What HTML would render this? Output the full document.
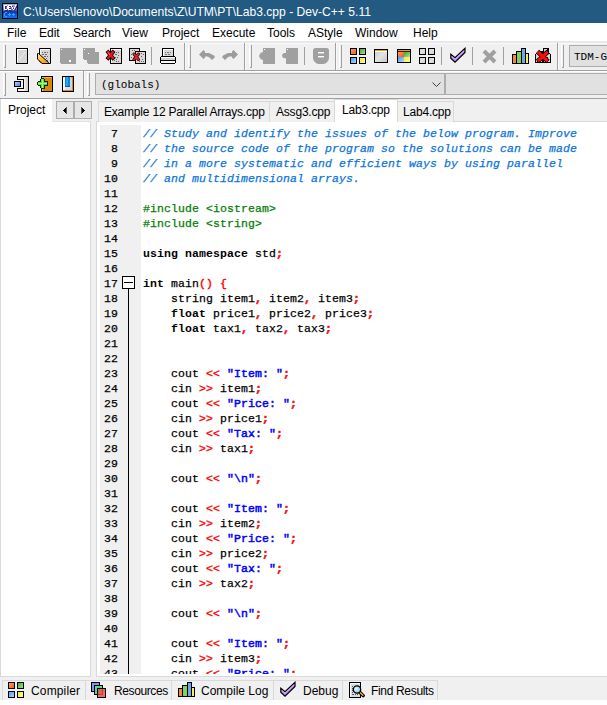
<!DOCTYPE html>
<html><head><meta charset="utf-8">
<style>
*{margin:0;padding:0;box-sizing:border-box}
html,body{width:607px;height:705px;overflow:hidden;background:#fff;position:relative;font-family:"Liberation Sans",sans-serif;font-size:12px;color:#000}
.a{position:absolute}
#title{left:0;top:0;width:607px;height:23px;background:#225a82}
#title .t{left:23px;top:5px;color:#fff;font-size:12.1px;white-space:nowrap}
#menu{left:0;top:23px;width:607px;height:18px;background:#fff}
#menu span{position:absolute;top:3px;white-space:nowrap}
#tb{left:0;top:41px;width:607px;height:58px;background:#f0f0f0;border-top:2px solid #e8e8e8}
.hl{position:absolute;height:1px}
.vl{position:absolute;width:1px}
.grip{position:absolute;width:3px;border-left:1px solid #fff;border-right:1px solid #a0a0a0}
.grip::after{content:"";position:absolute;left:0;bottom:0;width:1px;height:1px;background:#a0a0a0}
.bsep{position:absolute;width:2px;border-left:1px solid #a0a0a0;border-right:1px solid #fafafa}
.sep{position:absolute;width:1px;background:#a0a0a0}
.combo{position:absolute;background:#e1e1e1;border:1px solid #adadad;font-family:"Liberation Mono",monospace;font-size:11px;color:#000}
#tabs{left:0;top:99px;width:607px;height:578px;background:#f0f0f0}
#left{left:0;top:99px;width:91px;height:578px;background:#fff;border-left:1px solid #d9d9d9;border-right:1px solid #d9d9d9;border-bottom:1px solid #d9d9d9}
#code{left:96px;top:121px;width:511px;height:556px;background:#fff;border-left:1px solid #d9d9d9;border-top:1px solid #d9d9d9;border-bottom:1px solid #d9d9d9;overflow:hidden}
#gut{left:100px;top:125px;width:41px;height:549px;background:#f0f0f0}
#lines{position:absolute;left:0;top:0;width:607px;height:674px;overflow:hidden}
.ln{position:absolute;left:100px;width:18px;text-align:right;font-family:"Liberation Mono",monospace;font-size:11.5px;letter-spacing:0.1px;white-space:pre;height:15px;line-height:15px;-webkit-text-stroke:0.25px currentColor}
.cl{position:absolute;left:143px;font-family:"Liberation Mono",monospace;font-size:11.5px;letter-spacing:0.1px;white-space:pre;height:15px;line-height:15px;-webkit-text-stroke:0.25px currentColor}
.c{color:#0a74dc;font-style:italic}
.p{color:#008000}
.k{font-weight:bold;-webkit-text-stroke:0}
.s{color:#0000ff;font-weight:normal;-webkit-text-stroke:0.5px #0000ff}
.o{color:#ff0000;font-weight:normal;-webkit-text-stroke:0.4px #ff0000}
.q{font-weight:bold;-webkit-text-stroke:0.5px #ff0000}
.etab{position:absolute;top:101px;height:21px;background:#f0f0f0;border:1px solid #d9d9d9;border-bottom:none;white-space:nowrap}
.etab span{position:absolute;top:3px;letter-spacing:-0.2px}
#bot{left:0;top:677px;width:607px;height:23px;background:#f0f0f0}
.btab{position:absolute;top:680px;height:20px;border-left:1px solid #d9d9d9;border-top:1px solid #d9d9d9;white-space:nowrap}
</style></head><body>
<div id="title" class="a">
  <svg class="a" style="left:2px;top:3px" width="16" height="16" viewBox="0 0 16 16" shape-rendering="crispEdges">
    <defs><linearGradient id="gt" x1="0" y1="0" x2="0" y2="1"><stop offset="0" stop-color="#b8b0ec"/><stop offset="1" stop-color="#5a58b0"/></linearGradient>
    <linearGradient id="gb" x1="0" y1="0" x2="0" y2="1"><stop offset="0" stop-color="#0838b0"/><stop offset="1" stop-color="#1a70f0"/></linearGradient></defs>
    <rect x="0" y="0" width="16" height="16" fill="#02021a"/>
    <rect x="1" y="1" width="14" height="7" fill="url(#gt)"/>
    <rect x="1" y="8" width="14" height="7" fill="url(#gb)"/>
    <rect x="3" y="3" width="1" height="1" fill="#303078"/><rect x="4" y="3" width="1" height="1" fill="#303078"/><rect x="5" y="3" width="1" height="1" fill="#303078"/><rect x="3" y="4" width="1" height="1" fill="#303078"/><rect x="6" y="4" width="1" height="1" fill="#303078"/><rect x="3" y="5" width="1" height="1" fill="#303078"/><rect x="6" y="5" width="1" height="1" fill="#303078"/><rect x="3" y="6" width="1" height="1" fill="#303078"/><rect x="6" y="6" width="1" height="1" fill="#303078"/><rect x="3" y="7" width="1" height="1" fill="#303078"/><rect x="4" y="7" width="1" height="1" fill="#303078"/><rect x="5" y="7" width="1" height="1" fill="#303078"/><rect x="7" y="3" width="1" height="1" fill="#303078"/><rect x="8" y="3" width="1" height="1" fill="#303078"/><rect x="9" y="3" width="1" height="1" fill="#303078"/><rect x="7" y="4" width="1" height="1" fill="#303078"/><rect x="7" y="5" width="1" height="1" fill="#303078"/><rect x="8" y="5" width="1" height="1" fill="#303078"/><rect x="7" y="6" width="1" height="1" fill="#303078"/><rect x="7" y="7" width="1" height="1" fill="#303078"/><rect x="8" y="7" width="1" height="1" fill="#303078"/><rect x="9" y="7" width="1" height="1" fill="#303078"/><rect x="10" y="3" width="1" height="1" fill="#303078"/><rect x="14" y="3" width="1" height="1" fill="#303078"/><rect x="10" y="4" width="1" height="1" fill="#303078"/><rect x="14" y="4" width="1" height="1" fill="#303078"/><rect x="11" y="5" width="1" height="1" fill="#303078"/><rect x="13" y="5" width="1" height="1" fill="#303078"/><rect x="11" y="6" width="1" height="1" fill="#303078"/><rect x="13" y="6" width="1" height="1" fill="#303078"/><rect x="12" y="7" width="1" height="1" fill="#303078"/><rect x="2" y="2" width="1" height="1" fill="#fff"/><rect x="3" y="2" width="1" height="1" fill="#fff"/><rect x="4" y="2" width="1" height="1" fill="#fff"/><rect x="2" y="3" width="1" height="1" fill="#fff"/><rect x="5" y="3" width="1" height="1" fill="#fff"/><rect x="2" y="4" width="1" height="1" fill="#fff"/><rect x="5" y="4" width="1" height="1" fill="#fff"/><rect x="2" y="5" width="1" height="1" fill="#fff"/><rect x="5" y="5" width="1" height="1" fill="#fff"/><rect x="2" y="6" width="1" height="1" fill="#fff"/><rect x="3" y="6" width="1" height="1" fill="#fff"/><rect x="4" y="6" width="1" height="1" fill="#fff"/><rect x="6" y="2" width="1" height="1" fill="#fff"/><rect x="7" y="2" width="1" height="1" fill="#fff"/><rect x="8" y="2" width="1" height="1" fill="#fff"/><rect x="6" y="3" width="1" height="1" fill="#fff"/><rect x="6" y="4" width="1" height="1" fill="#fff"/><rect x="7" y="4" width="1" height="1" fill="#fff"/><rect x="6" y="5" width="1" height="1" fill="#fff"/><rect x="6" y="6" width="1" height="1" fill="#fff"/><rect x="7" y="6" width="1" height="1" fill="#fff"/><rect x="8" y="6" width="1" height="1" fill="#fff"/><rect x="9" y="2" width="1" height="1" fill="#fff"/><rect x="13" y="2" width="1" height="1" fill="#fff"/><rect x="9" y="3" width="1" height="1" fill="#fff"/><rect x="13" y="3" width="1" height="1" fill="#fff"/><rect x="10" y="4" width="1" height="1" fill="#fff"/><rect x="12" y="4" width="1" height="1" fill="#fff"/><rect x="10" y="5" width="1" height="1" fill="#fff"/><rect x="12" y="5" width="1" height="1" fill="#fff"/><rect x="11" y="6" width="1" height="1" fill="#fff"/><rect x="3" y="9" width="1" height="1" fill="#2aa8ff"/><rect x="4" y="9" width="1" height="1" fill="#2aa8ff"/><rect x="2" y="10" width="1" height="1" fill="#2aa8ff"/><rect x="2" y="11" width="1" height="1" fill="#2aa8ff"/><rect x="2" y="12" width="1" height="1" fill="#2aa8ff"/><rect x="3" y="13" width="1" height="1" fill="#2aa8ff"/><rect x="4" y="13" width="1" height="1" fill="#2aa8ff"/><rect x="7" y="10" width="1" height="1" fill="#2aa8ff"/><rect x="6" y="11" width="1" height="1" fill="#2aa8ff"/><rect x="7" y="11" width="1" height="1" fill="#2aa8ff"/><rect x="8" y="11" width="1" height="1" fill="#2aa8ff"/><rect x="7" y="12" width="1" height="1" fill="#2aa8ff"/><rect x="11" y="10" width="1" height="1" fill="#2aa8ff"/><rect x="10" y="11" width="1" height="1" fill="#2aa8ff"/><rect x="11" y="11" width="1" height="1" fill="#2aa8ff"/><rect x="12" y="11" width="1" height="1" fill="#2aa8ff"/><rect x="11" y="12" width="1" height="1" fill="#2aa8ff"/>
  </svg>
  <div class="a t">C:\Users\lenovo\Documents\Z\UTM\PT\Lab3.cpp - Dev-C++ 5.11</div>
</div>
<div id="menu" class="a">
  <span style="left:7px">File</span>
  <span style="left:39px">Edit</span>
  <span style="left:73px">Search</span>
  <span style="left:122px">View</span>
  <span style="left:162px">Project</span>
  <span style="left:212px">Execute</span>
  <span style="left:267px">Tools</span>
  <span style="left:308px">AStyle</span>
  <span style="left:355px">Window</span>
  <span style="left:413px">Help</span>
</div>
<div id="tb" class="a"></div>
<div class="hl" style="left:0;top:43px;width:607px;background:#fafafa"></div>
<!-- toolbar row divider -->
<div class="hl" style="left:0;top:70px;width:607px;background:#a0a0a0"></div>
<div class="hl" style="left:0;top:71px;width:607px;background:#fff"></div>
<div class="hl" style="left:0;top:98px;width:607px;background:#a0a0a0"></div>
<!-- grips row1 -->
<div class="grip" style="left:3px;top:45px;height:23px"></div>
<div class="bsep" style="left:184px;top:43px;height:27px"></div>
<div class="grip" style="left:188px;top:45px;height:23px"></div>
<div class="bsep" style="left:244px;top:43px;height:27px"></div>
<div class="grip" style="left:249px;top:45px;height:23px"></div>
<div class="bsep" style="left:335px;top:43px;height:27px"></div>
<div class="grip" style="left:339px;top:45px;height:23px"></div>
<div class="bsep" style="left:557px;top:43px;height:27px"></div>
<div class="grip" style="left:561px;top:45px;height:23px"></div>
<div class="sep" style="left:151px;top:47px;height:18px"></div>
<div class="sep" style="left:304px;top:47px;height:18px"></div>
<div class="sep" style="left:441px;top:47px;height:18px"></div>
<div class="sep" style="left:472px;top:47px;height:18px"></div>
<div class="sep" style="left:503px;top:47px;height:18px"></div>
<div class="combo" style="left:569px;top:45px;width:60px;height:22px"><span class="a" style="left:4px;top:5px">TDM-GCC</span></div>
<!-- grips row2 -->
<div class="grip" style="left:3px;top:73px;height:23px"></div>
<div class="bsep" style="left:83px;top:71px;height:27px"></div>
<div class="grip" style="left:87px;top:73px;height:23px"></div>
<div class="combo" style="left:95px;top:73px;width:350px;height:22px"><span class="a" style="left:5px;top:5px">(globals)</span>
  <svg class="a" style="left:336px;top:8px" width="9" height="6" viewBox="0 0 9 6"><path d="M0.5 0.5 L4.5 4.5 L8.5 0.5" stroke="#404040" stroke-width="1" fill="none"/></svg>
</div>
<div class="combo" style="left:445px;top:73px;width:170px;height:22px"></div>

<div id="tabs" class="a"></div>
<div id="left" class="a"></div>
<div class="a" style="left:52px;top:99px;width:39px;height:23px;background:#f0f0f0;border-bottom:1px solid #e3e3e3"></div>
<div class="a" style="left:0;top:99px;width:52px;height:23px;background:#fff;border-left:1px solid #d9d9d9"><span class="a" style="left:7px;top:4px">Project</span></div>
<div class="a" style="left:56px;top:101px;width:36px;height:18px;border:1px solid #adadad;background:#e6e6e6"></div>
<div class="a" style="left:73px;top:101px;width:2px;height:18px;background:#adadad"></div>
<svg class="a" style="left:63px;top:107px" width="4" height="7" viewBox="0 0 4 7" shape-rendering="crispEdges"><rect x="0" y="3" width="1" height="1"/><rect x="1" y="2" width="1" height="3"/><rect x="2" y="1" width="1" height="5"/><rect x="3" y="0" width="1" height="7" fill="#555"/></svg>
<svg class="a" style="left:81px;top:107px" width="4" height="7" viewBox="0 0 4 7" shape-rendering="crispEdges"><rect x="0" y="0" width="1" height="7" fill="#555"/><rect x="1" y="1" width="1" height="5"/><rect x="2" y="2" width="1" height="3"/><rect x="3" y="3" width="1" height="1"/></svg>

<div id="code" class="a"></div>
<div id="gut" class="a"></div>

<!-- editor tabs -->
<div class="etab" style="left:98px;width:172px"><span style="left:5px">Example 12 Parallel Arrays.cpp</span></div>
<div class="etab" style="left:269px;width:66px"><span style="left:6px">Assg3.cpp</span></div>
<div class="etab" style="left:397px;width:57px"><span style="left:5px">Lab4.cpp</span></div>
<div class="etab" style="left:334px;top:99px;width:64px;height:23px;background:#fff"><span style="left:7px;top:3px">Lab3.cpp</span></div>

<div class="a" style="left:122px;top:276px;width:13px;height:13px;border:1px solid #000;background:#fff"></div>
<div class="a" style="left:124px;top:282px;width:9px;height:1px;background:#000"></div>
<div class="a" style="left:128px;top:289px;width:1px;height:385px;background:#000"></div>
<div id="lines">
<div class="ln" style="top:126px">7</div>
<div class="cl" style="top:126px"><span class="c">// Study and identify the issues of the below program. Improve</span></div>
<div class="ln" style="top:141px">8</div>
<div class="cl" style="top:141px"><span class="c">// the source code of the program so the solutions can be made</span></div>
<div class="ln" style="top:156px">9</div>
<div class="cl" style="top:156px"><span class="c">// in a more systematic and efficient ways by using parallel</span></div>
<div class="ln" style="top:171px">10</div>
<div class="cl" style="top:171px"><span class="c">// and multidimensional arrays.</span></div>
<div class="ln" style="top:186px">11</div>
<div class="ln" style="top:201px">12</div>
<div class="cl" style="top:201px"><span class="p">#include &lt;iostream&gt;</span></div>
<div class="ln" style="top:216px">13</div>
<div class="cl" style="top:216px"><span class="p">#include &lt;string&gt;</span></div>
<div class="ln" style="top:231px">14</div>
<div class="ln" style="top:246px">15</div>
<div class="cl" style="top:246px"><span class="k">using</span> <span class="k">namespace</span> std<span class="o q">;</span></div>
<div class="ln" style="top:261px">16</div>
<div class="ln" style="top:276px">17</div>
<div class="cl" style="top:276px"><span class="k">int</span> main<span class="o">()</span> <span class="o">{</span></div>
<div class="ln" style="top:291px">18</div>
<div class="cl" style="top:291px">    string item1<span class="o q">,</span> item2<span class="o q">,</span> item3<span class="o q">;</span></div>
<div class="ln" style="top:306px">19</div>
<div class="cl" style="top:306px">    <span class="k">float</span> price1<span class="o q">,</span> price2<span class="o q">,</span> price3<span class="o q">;</span></div>
<div class="ln" style="top:321px">20</div>
<div class="cl" style="top:321px">    <span class="k">float</span> tax1<span class="o q">,</span> tax2<span class="o q">,</span> tax3<span class="o q">;</span></div>
<div class="ln" style="top:336px">21</div>
<div class="ln" style="top:351px">22</div>
<div class="ln" style="top:366px">23</div>
<div class="cl" style="top:366px">    cout <span class="o">&lt;&lt;</span> <span class="s">&quot;Item: &quot;</span><span class="o q">;</span></div>
<div class="ln" style="top:381px">24</div>
<div class="cl" style="top:381px">    cin <span class="o">&gt;&gt;</span> item1<span class="o q">;</span></div>
<div class="ln" style="top:396px">25</div>
<div class="cl" style="top:396px">    cout <span class="o">&lt;&lt;</span> <span class="s">&quot;Price: &quot;</span><span class="o q">;</span></div>
<div class="ln" style="top:411px">26</div>
<div class="cl" style="top:411px">    cin <span class="o">&gt;&gt;</span> price1<span class="o q">;</span></div>
<div class="ln" style="top:426px">27</div>
<div class="cl" style="top:426px">    cout <span class="o">&lt;&lt;</span> <span class="s">&quot;Tax: &quot;</span><span class="o q">;</span></div>
<div class="ln" style="top:441px">28</div>
<div class="cl" style="top:441px">    cin <span class="o">&gt;&gt;</span> tax1<span class="o q">;</span></div>
<div class="ln" style="top:456px">29</div>
<div class="ln" style="top:471px">30</div>
<div class="cl" style="top:471px">    cout <span class="o">&lt;&lt;</span> <span class="s">&quot;\n&quot;</span><span class="o q">;</span></div>
<div class="ln" style="top:486px">31</div>
<div class="ln" style="top:501px">32</div>
<div class="cl" style="top:501px">    cout <span class="o">&lt;&lt;</span> <span class="s">&quot;Item: &quot;</span><span class="o q">;</span></div>
<div class="ln" style="top:516px">33</div>
<div class="cl" style="top:516px">    cin <span class="o">&gt;&gt;</span> item2<span class="o q">;</span></div>
<div class="ln" style="top:531px">34</div>
<div class="cl" style="top:531px">    cout <span class="o">&lt;&lt;</span> <span class="s">&quot;Price: &quot;</span><span class="o q">;</span></div>
<div class="ln" style="top:546px">35</div>
<div class="cl" style="top:546px">    cin <span class="o">&gt;&gt;</span> price2<span class="o q">;</span></div>
<div class="ln" style="top:561px">36</div>
<div class="cl" style="top:561px">    cout <span class="o">&lt;&lt;</span> <span class="s">&quot;Tax: &quot;</span><span class="o q">;</span></div>
<div class="ln" style="top:576px">37</div>
<div class="cl" style="top:576px">    cin <span class="o">&gt;&gt;</span> tax2<span class="o q">;</span></div>
<div class="ln" style="top:591px">38</div>
<div class="ln" style="top:606px">39</div>
<div class="cl" style="top:606px">    cout <span class="o">&lt;&lt;</span> <span class="s">&quot;\n&quot;</span><span class="o q">;</span></div>
<div class="ln" style="top:621px">40</div>
<div class="ln" style="top:636px">41</div>
<div class="cl" style="top:636px">    cout <span class="o">&lt;&lt;</span> <span class="s">&quot;Item: &quot;</span><span class="o q">;</span></div>
<div class="ln" style="top:651px">42</div>
<div class="cl" style="top:651px">    cin <span class="o">&gt;&gt;</span> item3<span class="o q">;</span></div>
<div class="ln" style="top:666px">43</div>
<div class="cl" style="top:666px">    cout <span class="o">&lt;&lt;</span> <span class="s">&quot;Price: &quot;</span><span class="o q">;</span></div>
</div>

<div id="bot" class="a"></div>
<div class="a" style="left:0;top:700px;width:607px;height:5px;background:#fff"></div>
<div class="btab" style="left:2px;width:83px"><span class="a" style="left:28px;top:3px;letter-spacing:0.15px">Compiler</span></div>
<div class="btab" style="left:85px;width:86px"><span class="a" style="left:28px;top:3px;letter-spacing:-0.4px">Resources</span></div>
<div class="btab" style="left:171px;width:102px"><span class="a" style="left:29px;top:3px">Compile Log</span></div>
<div class="btab" style="left:273px;width:69px"><span class="a" style="left:29px;top:3px">Debug</span></div>
<div class="btab" style="left:342px;width:96px;border-right:1px solid #d9d9d9"><span class="a" style="left:28px;top:3px;letter-spacing:-0.33px">Find Results</span></div>

<svg width="0" height="0" style="position:absolute"><defs>
<linearGradient id="gO" x1="0" y1="0" x2="1" y2="1"><stop offset="0" stop-color="#ffa070"/><stop offset="1" stop-color="#e85a18"/></linearGradient>
<linearGradient id="gG" x1="0" y1="0" x2="1" y2="1"><stop offset="0" stop-color="#40a030"/><stop offset="1" stop-color="#a8e890"/></linearGradient>
<linearGradient id="gB" x1="0" y1="0" x2="1" y2="1"><stop offset="0" stop-color="#4a98e8"/><stop offset="1" stop-color="#b0d8ff"/></linearGradient>
<linearGradient id="gY" x1="0" y1="0" x2="1" y2="1"><stop offset="0" stop-color="#f0e830"/><stop offset="1" stop-color="#ffff9a"/></linearGradient>
<linearGradient id="gW" x1="0" y1="0" x2="1" y2="1"><stop offset="0" stop-color="#c8c8c8"/><stop offset="0.5" stop-color="#e2e2e2"/><stop offset="1" stop-color="#c4c4c4"/></linearGradient>
</defs></svg>
<!-- ===== toolbar row 1 icons ===== -->
<svg class="a" style="left:16px;top:48px" width="12" height="16" viewBox="0 0 12 16" shape-rendering="crispEdges">
  <rect x="0.5" y="0.5" width="11" height="15" rx="1" fill="#d6d6d6" stroke="#000"/>
  <path d="M1.5 14 V1.5 H10.5" stroke="#fff" fill="none"/>
  <path d="M3 12 L9 4" stroke="#e4e4e4" stroke-width="1.5" shape-rendering="auto"/>
</svg>
<svg class="a" style="left:36px;top:48px" width="15" height="16" viewBox="0 0 15 16">
  <defs><linearGradient id="og" x1="0" y1="0" x2="0.6" y2="1"><stop offset="0" stop-color="#ffe9a0"/><stop offset="0.5" stop-color="#ffc040"/><stop offset="1" stop-color="#ff9800"/></linearGradient></defs>
  <path d="M3.5 0.5 H14.5 V15.5 H6 L3.5 13 Z" fill="#d6d6d6" stroke="#000"/>
  <path d="M4.5 12 V1.5 H13.5" stroke="#fafafa" fill="none" shape-rendering="crispEdges"/>
  <g fill="#6a6a6a" shape-rendering="crispEdges"><rect x="6" y="4" width="1" height="1"/><rect x="8" y="4" width="2" height="1"/><rect x="11" y="4" width="1" height="1"/><rect x="6" y="6" width="2" height="1"/><rect x="9" y="6" width="2" height="1"/><rect x="8" y="8" width="2" height="1"/><rect x="11" y="8" width="1" height="1"/><rect x="10" y="10" width="1" height="1"/><rect x="11" y="12" width="1" height="1"/></g>
  <path d="M1.5 5.5 L2.5 5.5 L12.5 14.5 L12.5 15.5 L6 15.5 L1.5 11 Z" fill="url(#og)" stroke="#000" stroke-width="1" stroke-linejoin="miter"/>
</svg>
<svg class="a" style="left:60px;top:48px" width="16" height="16" viewBox="0 0 16 16" shape-rendering="crispEdges">
  <path d="M0 0 H16 V16 H1 L0 15 Z" fill="#a0a0a0"/>
  <rect x="1" y="1" width="1" height="1" fill="#fff"/><rect x="9" y="12" width="2" height="2" fill="#fff"/>
</svg>
<svg class="a" style="left:83px;top:48px" width="16" height="16" viewBox="0 0 16 16" shape-rendering="crispEdges">
  <path d="M0 0 H12 V4 H16 V16 H5 L4 15 V12 H1 L0 11 Z" fill="#a0a0a0"/>
  <rect x="1" y="1" width="1" height="1" fill="#fff"/><rect x="5" y="5" width="1" height="1" fill="#fff"/>
</svg>
<svg class="a" style="left:105px;top:48px" width="18" height="16" viewBox="0 0 18 16">
  <rect x="5.5" y="0.5" width="11" height="15" fill="#d8d8d8" stroke="#000" shape-rendering="crispEdges"/>
  <path d="M6.5 14.5 V1.5 H15.5" stroke="#fff" fill="none" shape-rendering="crispEdges"/>
  <g fill="#666" shape-rendering="crispEdges"><rect x="11" y="4" width="1" height="1"/><rect x="13" y="4" width="1" height="1"/><rect x="10" y="6" width="2" height="1"/><rect x="13" y="7" width="1" height="1"/><rect x="10" y="9" width="1" height="1"/><rect x="12" y="9" width="1" height="1"/><rect x="11" y="11" width="1" height="1"/><rect x="9" y="12" width="1" height="1"/><rect x="11" y="13" width="1" height="1"/><rect x="13" y="13" width="1" height="1"/></g>
  <path d="M3.2 4.2 L7.8 10 M7.8 4.2 L3.2 10" stroke="#000" stroke-width="3.8" stroke-linecap="square"/>
  <path d="M3.2 4.2 L7.8 10 M7.8 4.2 L3.2 10" stroke="#f01020" stroke-width="2.3" stroke-linecap="square"/>
  <path d="M2.8 4.6 L5 7" stroke="#ff9090" stroke-width="0.7"/>
</svg>
<svg class="a" style="left:129px;top:48px" width="17" height="16" viewBox="0 0 17 16">
  <rect x="0.5" y="0.5" width="10" height="12" fill="#d8d8d8" stroke="#000" shape-rendering="crispEdges"/>
  <rect x="6.5" y="3.5" width="10" height="12" fill="#d8d8d8" stroke="#000" shape-rendering="crispEdges"/>
  <g fill="#666" shape-rendering="crispEdges"><rect x="3" y="2" width="1" height="1"/><rect x="5" y="2" width="1" height="1"/><rect x="2" y="6" width="1" height="1"/><rect x="2" y="9" width="1" height="1"/><rect x="12" y="5" width="1" height="1"/><rect x="14" y="6" width="1" height="1"/><rect x="12" y="8" width="1" height="1"/><rect x="13" y="11" width="1" height="1"/><rect x="10" y="13" width="1" height="1"/><rect x="12" y="13" width="1" height="1"/><rect x="14" y="13" width="1" height="1"/></g>
  <path d="M5 6 L9.5 11.5 M9.5 6 L5 11.5" stroke="#000" stroke-width="3" stroke-linecap="round"/>
  <path d="M5 6 L9.5 11.5 M9.5 6 L5 11.5" stroke="#ee1c25" stroke-width="1.8" stroke-linecap="round"/>
</svg>
<svg class="a" style="left:159px;top:48px" width="18" height="17" viewBox="0 0 18 17">
  <rect x="3.5" y="0.5" width="11" height="8" fill="#d8d8d8" stroke="#000" shape-rendering="crispEdges"/>
  <path d="M4.5 7.5 V1.5 H13.5" stroke="#fff" fill="none" shape-rendering="crispEdges"/>
  <g fill="#777" shape-rendering="crispEdges"><rect x="6" y="4" width="1" height="1"/><rect x="8" y="4" width="2" height="1"/><rect x="11" y="4" width="1" height="1"/><rect x="6" y="6" width="2" height="1"/><rect x="9" y="6" width="2" height="1"/></g>
  <rect x="1.5" y="8.5" width="15" height="7" fill="#e0e0e0" stroke="#000" shape-rendering="crispEdges"/>
  <rect x="2" y="9" width="14" height="1" fill="#fafafa" shape-rendering="crispEdges"/>
  <rect x="2" y="10" width="14" height="2" fill="#d0d0d0" shape-rendering="crispEdges"/>
  <rect x="2" y="12" width="14" height="1" fill="#000" shape-rendering="crispEdges"/>
  <rect x="2" y="13" width="14" height="2" fill="#f8f8f8" shape-rendering="crispEdges"/>
  <rect x="1" y="8" width="1" height="1" fill="#f0f0f0"/><rect x="16" y="8" width="1" height="1" fill="#f0f0f0"/>
  <rect x="1" y="15" width="1" height="1" fill="#f0f0f0"/><rect x="16" y="15" width="1" height="1" fill="#f0f0f0"/>
</svg>
<svg class="a" style="left:198px;top:49px" width="18" height="12" viewBox="0 0 18 12"><path d="M1 5.5 L5.5 1 L7 2.5 L7 4 L11 4 L14 5.5 L16 6.5 L17 8 L14 11 L11.5 8.5 L9.5 7.5 L7 7.5 L7 8.5 L5.5 10 Z" fill="#9c9c9c"/></svg>
<svg class="a" style="left:222px;top:49px" width="18" height="12" viewBox="0 0 18 12"><path d="M16 5.5 L11.5 1 L10 2.5 L10 4 L6 4 L3 5.5 L1 6.5 L0 8 L3 11 L5.5 8.5 L7.5 7.5 L10 7.5 L10 8.5 L11.5 10 Z" fill="#9c9c9c"/></svg>
<svg class="a" style="left:258px;top:48px" width="18" height="16" viewBox="0 0 18 16"><path d="M5 0 H17 V16 H5 V12 L3.5 11.6 L2 10.2 L1 8 L2 5.8 L3.5 4.4 L5 4 Z" fill="#a0a0a0"/><rect x="6" y="1" width="1" height="1" fill="#fff"/></svg>
<svg class="a" style="left:281px;top:48px" width="18" height="16" viewBox="0 0 18 16"><path d="M5 0 H17 V16 H5 V10.2 L3 10.2 L1.6 9.2 L1 7.6 L1.6 6 L3 5 H5 Z" fill="#a0a0a0"/><rect x="6" y="1" width="1" height="1" fill="#fff"/></svg>
<svg class="a" style="left:313px;top:48px" width="16" height="16" viewBox="0 0 16 16"><path d="M0 2.5 Q0 0 2.5 0 H13.5 Q16 0 16 2.5 V9.5 C16 13 13 16 10.5 16 H5.5 C3 16 0 13 0 9.5 Z" fill="#a0a0a0"/><rect x="5" y="4" width="6" height="1.4" fill="#fff"/><rect x="5" y="8" width="6" height="1.4" fill="#fff"/></svg>
<svg class="a" style="left:349px;top:48px" width="18" height="17" viewBox="0 0 18 17" shape-rendering="crispEdges">
  <rect x="1.5" y="0.5" width="6" height="6" fill="url(#gO)" stroke="#000"/>
  <rect x="10.5" y="0.5" width="6" height="6" fill="url(#gG)" stroke="#000"/>
  <rect x="1.5" y="9.5" width="6" height="6" fill="url(#gB)" stroke="#000"/>
  <rect x="10.5" y="9.5" width="6" height="6" fill="url(#gY)" stroke="#000"/>
</svg>
<svg class="a" style="left:374px;top:49px" width="16" height="15" viewBox="0 0 16 15" shape-rendering="crispEdges">
  <rect x="0.5" y="0.5" width="13" height="13" rx="1" fill="url(#gW)" stroke="#000"/>
  <rect x="1" y="1" width="12" height="1" fill="#f59a0a"/>
  <rect x="1" y="2" width="12" height="1" fill="#fff"/>
</svg>
<svg class="a" style="left:397px;top:49px" width="15" height="15" viewBox="0 0 15 15" shape-rendering="crispEdges">
  <rect x="0.5" y="0.5" width="13" height="13" rx="1" fill="#d6d6d6" stroke="#000"/>
  <rect x="1" y="1" width="12" height="1" fill="#f59a0a"/>
  <rect x="1" y="2" width="12" height="1" fill="#222"/>
  <rect x="1" y="3" width="6" height="5" fill="url(#gO)"/><rect x="7" y="3" width="6" height="5" fill="url(#gG)"/>
  <rect x="1" y="8" width="6" height="5" fill="url(#gB)"/><rect x="7" y="8" width="6" height="5" fill="url(#gY)"/>
</svg>
<svg class="a" style="left:419px;top:48px" width="17" height="16" viewBox="0 0 17 16" shape-rendering="crispEdges">
  <rect x="0.5" y="0.5" width="6" height="6" rx="1" fill="url(#gW)" stroke="#000"/>
  <rect x="9.5" y="0.5" width="6" height="6" rx="1" fill="url(#gW)" stroke="#000"/>
  <rect x="0.5" y="9.5" width="6" height="6" rx="1" fill="url(#gW)" stroke="#000"/>
  <rect x="9.5" y="9.5" width="6" height="6" rx="1" fill="url(#gW)" stroke="#000"/>
</svg>
<svg class="a" style="left:449px;top:47px" width="18" height="17" viewBox="0 0 18 17">
  <path d="M1.8 7.3 L6 10.6 L16 1.3 L16 5.5 L6 15.2 L1.8 11.3 Z" fill="#b48af0" stroke="#000" stroke-width="1.2" stroke-linejoin="miter"/>
  <path d="M2.8 9.5 L6 12.3 L14.8 4" stroke="#dcc4ff" stroke-width="0.9" fill="none"/>
</svg>
<svg class="a" style="left:482px;top:49px" width="15" height="15" viewBox="0 0 15 15">
  <path d="M2 2 L13 13 M13 2 L2 13" stroke="#a0a0a0" stroke-width="4"/>
</svg>
<svg class="a" style="left:512px;top:48px" width="17" height="16" viewBox="0 0 17 16" shape-rendering="crispEdges">
  <path d="M0.5 15.5 V6.5 H4.5 V3.5 H9.5 V0.5 H13.5 V5.5 H16.5 V15.5 Z" fill="#000" stroke="#000"/>
  <rect x="1" y="7" width="3" height="8" fill="#f7893a"/>
  <rect x="5" y="4" width="4" height="11" fill="#7fd35c"/>
  <rect x="10" y="1" width="3" height="14" fill="#6aa8f0"/>
  <rect x="14" y="6" width="2" height="9" fill="#f4f25a"/>
</svg>
<svg class="a" style="left:534px;top:48px" width="18" height="16" viewBox="0 0 18 16">
  <path d="M1.5 14.5 V6.5 L4 4 H9.5 V0.5 H14 V4 L16.5 6.5 V14.5 Z" fill="#d4d4d4" stroke="#000" stroke-width="1.1" shape-rendering="crispEdges"/>
  <g fill="#000" shape-rendering="crispEdges"><rect x="3" y="12" width="2" height="2"/><rect x="8" y="12" width="2" height="2"/><rect x="13" y="9" width="1" height="4"/></g>
  <path d="M3.5 3.5 L14 13.5 M14 3.5 L3.5 13.5" stroke="#000" stroke-width="4.6"/>
  <path d="M3.8 3.8 L13.7 13.2 M13.7 3.8 L3.8 13.2" stroke="#ff0a0a" stroke-width="3.2"/>
</svg>
<!-- ===== toolbar row 2 icons ===== -->
<svg class="a" style="left:13px;top:76px" width="17" height="16" viewBox="0 0 17 16" shape-rendering="crispEdges">
  <defs><linearGradient id="brk" x1="0" y1="0" x2="1" y2="0"><stop offset="0" stop-color="#f6f6f6"/><stop offset="1" stop-color="#c8c8c8"/></linearGradient>
  <linearGradient id="blu" x1="0" y1="0" x2="1" y2="1"><stop offset="0" stop-color="#b8dcff"/><stop offset="1" stop-color="#3a78e0"/></linearGradient></defs>
  <path d="M4.5 0.5 H15.5 V15.5 H4.5 V12.5 H10.5 V3.5 H4.5 Z" fill="#f2f2f2" stroke="#000"/>
  <rect x="11" y="1" width="4" height="14" fill="url(#brk)"/>
  <rect x="1.5" y="5.5" width="6" height="5" fill="url(#blu)" stroke="#000"/>
</svg>
<svg class="a" style="left:37px;top:76px" width="17" height="16" viewBox="0 0 17 16" shape-rendering="crispEdges">
  <rect x="4.5" y="0.5" width="11" height="15" fill="#d8860c" stroke="#000"/>
  <rect x="5" y="1" width="10" height="1" fill="#f8b040"/>
  <rect x="5" y="1" width="1" height="14" fill="#f0c080"/>
  <path d="M3.5 2.5 H7.5 V5.5 H10.5 V9.5 H7.5 V12.5 H3.5 V9.5 H0.5 V5.5 H3.5 Z" fill="#58e030" stroke="#102808"/>
  <rect x="3" y="2" width="1" height="1" fill="#f0f0f0"/><rect x="7" y="2" width="1" height="1" fill="#d8860c"/>
  <rect x="0" y="5" width="1" height="1" fill="#f0f0f0"/><rect x="0" y="9" width="1" height="1" fill="#f0f0f0"/>
  <rect x="3" y="12" width="1" height="1" fill="#f0f0f0"/>
  <rect x="5" y="3" width="1" height="9" fill="#a8f890"/><rect x="1" y="7" width="9" height="1" fill="#a8f890"/>
</svg>
<svg class="a" style="left:62px;top:76px" width="13" height="16" viewBox="0 0 13 16" shape-rendering="crispEdges">
  <rect x="0.5" y="0.5" width="11" height="15" fill="#eeeeee" stroke="#000"/>
  <rect x="1" y="1" width="2" height="13" fill="#f8f8f8"/>
  <rect x="8" y="1" width="2" height="13" fill="#d4d4d4"/>
  <rect x="3" y="11" width="5" height="3" fill="#dcdcdc"/>
  <rect x="10" y="1" width="1" height="14" fill="#d88a10"/>
  <rect x="1" y="14" width="10" height="1" fill="#d88a10"/>
  <rect x="1" y="1" width="1" height="1" fill="#ffe080"/><rect x="9" y="1" width="1" height="1" fill="#f0a040"/>
  <rect x="3" y="1" width="5" height="10" fill="#0a84d8"/>
  <rect x="4" y="1" width="2" height="9" fill="#20a8f8"/>
  <rect x="3" y="10" width="5" height="1" fill="#0860a0"/>
</svg>
<!-- ===== bottom tab icons ===== -->
<svg class="a" style="left:7px;top:682px" width="18" height="17" viewBox="0 0 18 17" shape-rendering="crispEdges">
  <rect x="1.5" y="0.5" width="6" height="6" fill="url(#gO)" stroke="#000"/>
  <rect x="10.5" y="0.5" width="6" height="6" fill="url(#gG)" stroke="#000"/>
  <rect x="1.5" y="9.5" width="6" height="6" fill="url(#gB)" stroke="#000"/>
  <rect x="10.5" y="9.5" width="6" height="6" fill="url(#gY)" stroke="#000"/>
</svg>
<svg class="a" style="left:91px;top:682px" width="16" height="16" viewBox="0 0 16 16" shape-rendering="crispEdges">
  <rect x="0.5" y="0.5" width="8" height="9" fill="#8c8cf8" stroke="#000"/>
  <rect x="3.5" y="3.5" width="8" height="9" fill="#50e080" fill-opacity="0.9" stroke="#000"/>
  <rect x="6.5" y="6.5" width="8" height="9" fill="#f04a40" fill-opacity="0.82" stroke="#000"/>
</svg>
<svg class="a" style="left:178px;top:682px" width="17" height="16" viewBox="0 0 17 16" shape-rendering="crispEdges">
  <path d="M0.5 14.5 V6.5 H4.5 V3.5 H9.5 V0.5 H13.5 V5.5 H16.5 V14.5 Z" fill="#000" stroke="#000"/>
  <rect x="1" y="7" width="3" height="7" fill="#f7893a"/>
  <rect x="5" y="4" width="4" height="10" fill="#7fd35c"/>
  <rect x="10" y="1" width="3" height="13" fill="#6aa8f0"/>
  <rect x="14" y="6" width="2" height="8" fill="#f4f25a"/>
</svg>
<svg class="a" style="left:279px;top:681px" width="18" height="17" viewBox="0 0 18 17">
  <path d="M1.8 7.3 L6 10.6 L16 1.3 L16 5.5 L6 15.2 L1.8 11.3 Z" fill="#b48af0" stroke="#000" stroke-width="1.2" stroke-linejoin="miter"/>
  <path d="M2.8 9.5 L6 12.3 L14.8 4" stroke="#dcc4ff" stroke-width="0.9" fill="none"/>
</svg>
<svg class="a" style="left:349px;top:682px" width="17" height="16" viewBox="0 0 17 16">
  <defs><radialGradient id="lens" cx="0.4" cy="0.4" r="0.6"><stop offset="0" stop-color="#e8f8ff"/><stop offset="1" stop-color="#80c8f0"/></radialGradient></defs>
  <rect x="0.5" y="0.5" width="11" height="15" fill="#dcdcdc" stroke="#000" shape-rendering="crispEdges"/>
  <path d="M1.5 14.5 V1.5 H10.5" stroke="#fafafa" fill="none" shape-rendering="crispEdges"/>
  <g fill="#555" shape-rendering="crispEdges"><rect x="3" y="4" width="1" height="1"/><rect x="3" y="6" width="1" height="1"/><rect x="3" y="8" width="1" height="1"/><rect x="3" y="10" width="1" height="1"/><rect x="3" y="12" width="2" height="1"/><rect x="6" y="12" width="1" height="1"/><rect x="8" y="12" width="1" height="1"/></g>
  <path d="M10.5 10 L14.2 13.6" stroke="#000" stroke-width="3.4" stroke-linecap="round"/>
  <path d="M10.8 10.3 L13.9 13.3" stroke="#f0a820" stroke-width="1.6" stroke-linecap="round"/>
  <circle cx="8" cy="7.5" r="3.7" fill="url(#lens)" stroke="#000" stroke-width="1.3"/>
</svg>
</body></html>
